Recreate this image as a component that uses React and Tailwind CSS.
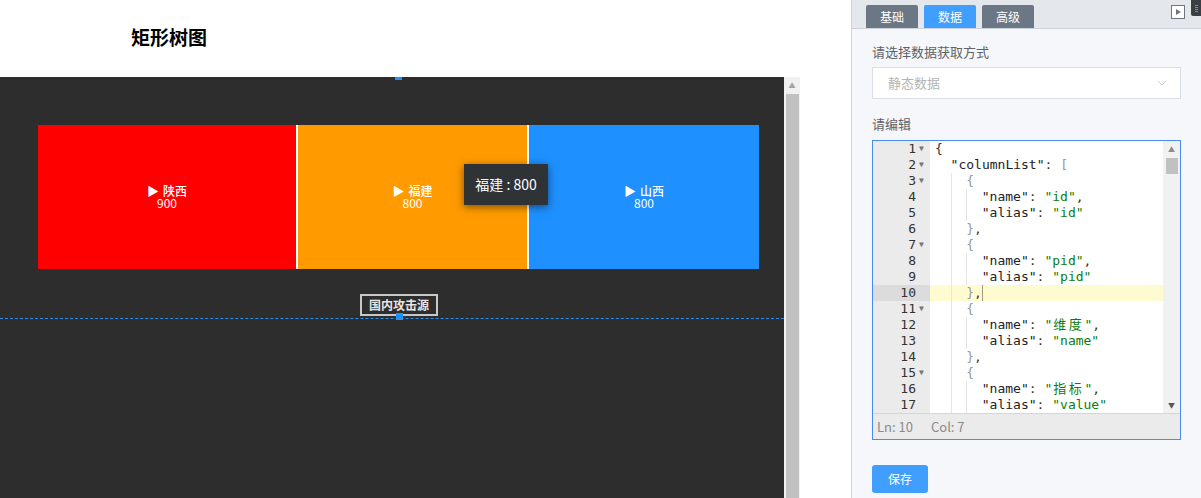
import { ChevronDown } from 'lucide-react';

const code = [
  { t: [['p', '{']], fold: true, ind: 0 },
  { t: [['k', '"columnList"'], ['p', ': '], ['b', '[']], fold: true, ind: 1 },
  { t: [['b', '{']], fold: true, ind: 2 },
  { t: [['k', '"name"'], ['p', ': '], ['s', '"id"'], ['p', ',']], ind: 3 },
  { t: [['k', '"alias"'], ['p', ': '], ['s', '"id"']], ind: 3 },
  { t: [['b', '}'], ['p', ',']], ind: 2 },
  { t: [['b', '{']], fold: true, ind: 2 },
  { t: [['k', '"name"'], ['p', ': '], ['s', '"pid"'], ['p', ',']], ind: 3 },
  { t: [['k', '"alias"'], ['p', ': '], ['s', '"pid"']], ind: 3 },
  { t: [['b', '}'], ['p', ',']], ind: 2, active: true },
  { t: [['b', '{']], fold: true, ind: 2 },
  { t: [['k', '"name"'], ['p', ': '], ['s', '"'], ['c', '维度'], ['s', '"'], ['p', ',']], ind: 3 },
  { t: [['k', '"alias"'], ['p', ': '], ['s', '"name"']], ind: 3 },
  { t: [['b', '}'], ['p', ',']], ind: 2 },
  { t: [['b', '{']], fold: true, ind: 2 },
  { t: [['k', '"name"'], ['p', ': '], ['s', '"'], ['c', '指标'], ['s', '"'], ['p', ',']], ind: 3 },
  { t: [['k', '"alias"'], ['p', ': '], ['s', '"value"']], ind: 3 },
];

const tokenClass = {
  p: 'text-[#333]',
  b: 'text-[#999]',
  k: 'text-[#222]',
  s: 'text-[#0a7d0a]',
  c: 'text-[#0a7d0a] tracking-[2.6px] pl-[1px]',
};

function Cell({ color, name, value, border }) {
  return (
    <div className={`h-full flex flex-col items-center justify-center text-white text-[12px] ${color} ${border ? 'border-l-2 border-white' : ''}`}>
      <div className="h-[12px] leading-[12px] flex items-center gap-1 font-medium">
        <span>▶</span>
        <span>{name}</span>
      </div>
      <div className="h-[12px] leading-[12px]">{value}</div>
    </div>
  );
}

function Editor() {
  return (
    <div className="mt-[7px] h-[300px] border border-[#4a8af4] bg-white flex flex-col">
      <div className="flex-1 flex overflow-hidden relative">
        <div className="w-[57px] bg-[#ebebeb] text-[13px] text-[#333]" style={{ fontFamily: '"DejaVu Sans Mono", monospace' }}>
          {code.map((l, i) => (
            <div key={i} className={`h-4 leading-4 flex justify-end pr-[4px] ${l.active ? 'bg-[#dcdcdc]' : ''}`}>
              <span>{i + 1}</span>
              <span className="w-[10px] text-[8px] text-[#777] pl-[3px] leading-4">{l.fold ? '▼' : ''}</span>
            </div>
          ))}
        </div>
        <div className="flex-1 text-[13px] relative" style={{ fontFamily: '"DejaVu Sans Mono", "Noto Sans CJK SC", monospace' }}>
          {code.map((l, i) => (
            <div key={i} className={`h-4 leading-4 pl-[5px] flex whitespace-pre ${l.active ? 'bg-[#fffbd1]' : ''}`}>
              {Array.from({ length: l.ind }).map((_, j) => (
                <span key={j} className={`w-[15.6px] shrink-0 ${j > 0 ? 'border-l border-[#e6e6e6]' : ''}`}></span>
              ))}
              {l.t.map(([c, s], j) => (
                <span key={j} className={tokenClass[c]}>{s}</span>
              ))}
              {l.active && <span className="w-px h-4 bg-[#a39a7a]"></span>}
            </div>
          ))}
        </div>
        <div className="w-[17px] bg-[#f1f1f1] flex flex-col items-center">
          <span className="text-[7px] text-[#8a8a8a] leading-[10px] mt-[3px]">▲</span>
          <div className="w-[12px] h-[16px] bg-[#c1c1c1] mt-[4px]"></div>
          <div className="flex-1"></div>
          <span className="text-[7px] text-[#555] leading-[10px] mb-[3px]">▼</span>
        </div>
      </div>
      <div className="h-[26px] bg-[#ebebeb] border-t border-[#d6d6d6] flex items-center pl-[4px] gap-[18px] text-[13px] text-[#8a8a8a]">
        <span>Ln: 10</span>
        <span>Col: 7</span>
      </div>
    </div>
  );
}

export default function App() {
  return (
    <div className="w-[1201px] h-[498px] flex overflow-hidden bg-white" style={{ fontFamily: '"Noto Sans CJK SC", "Noto Sans", sans-serif' }}>
      {/* Canvas side */}
      <div className="w-[851px] flex flex-col shrink-0">
        <div className="h-[77px] flex items-center pl-[131px] pb-[3px]">
          <h1 className="text-[19px] font-bold text-black">矩形树图</h1>
        </div>
        <div className="flex-1 flex">
          <div className="w-[784px] bg-[#2d2d2d] relative pt-[48px] pl-[38px]">
            <div className="absolute left-[395px] top-0 w-[7px] h-[3px] bg-[#1e90ff]"></div>
            <div className="w-[721px] h-[144px] grid grid-cols-[258px_231px_232px]">
              <Cell color="bg-[#ff0000]" name="陕西" value="900" />
              <Cell color="bg-[#ff9b00]" name="福建" value="800" border />
              <Cell color="bg-[#1e90ff]" name="山西" value="800" border />
            </div>
            <div className="absolute left-[464px] top-[87px] w-[84px] h-[41px] bg-[#2f3336] text-white text-[14px] flex items-center justify-center shadow-[0_2px_8px_rgba(0,0,0,0.5)]">
              福建 : 800
            </div>
            <div className="absolute left-0 right-0 top-[241px] border-t border-dashed border-[#2b8ee6]"></div>
            <div className="absolute left-[360px] top-[217px] w-[78px] h-[22px] border-2 border-[#c8c8c8] flex items-center justify-center text-[12px] font-bold text-[#e6e6e6] leading-none">
              国内攻击源
            </div>
            <div className="absolute left-[396px] top-[236px] w-[7px] h-[7px] bg-[#1e90ff]"></div>
          </div>
          <div className="w-[16px] bg-[#f1f1f1] flex flex-col items-center">
            <div className="h-[17px] flex items-center justify-center text-[7px] text-[#a3a3a3]">▲</div>
            <div className="w-[13px] flex-1 bg-[#c1c1c1] ml-[1px]"></div>
          </div>
          <div className="flex-1 bg-white"></div>
        </div>
      </div>

      {/* Properties panel */}
      <div className="flex-1 bg-[#f5f7fa] border-l border-[#cfd5dd] flex flex-col">
        <div className="h-[29px] bg-[#e4e7eb] border-b border-[#ccd2da] flex items-end pl-[14px] gap-[6px] relative">
          <div className="w-[52px] h-[23px] bg-[#6b7785] text-white text-[12px] flex items-center justify-center rounded-t-[2px]">基础</div>
          <div className="w-[52px] h-[23px] bg-[#409eff] text-white text-[12px] flex items-center justify-center rounded-t-[2px]">数据</div>
          <div className="w-[52px] h-[23px] bg-[#6b7785] text-white text-[12px] flex items-center justify-center rounded-t-[2px]">高级</div>
          <div className="absolute left-[319px] top-[5px] w-[14px] h-[14px] border border-[#6b7785] bg-white flex items-center justify-center">
            <span className="w-0 h-0 border-y-[3.5px] border-y-transparent border-l-[5px] border-l-[#6b7785] ml-[1px]"></span>
          </div>
          <div className="absolute left-[339px] top-0 w-[10px] h-[16px] bg-[#3a3f45] rounded-bl-[2px] flex flex-col items-center justify-center gap-[1px]">
            <span className="w-[3px] h-[1px] bg-[#1ea7ff]"></span>
            <span className="w-[3px] h-[1px] bg-[#1ea7ff]"></span>
            <span className="w-[3px] h-[1px] bg-[#1ea7ff]"></span>
            <span className="w-[3px] h-[1px] bg-[#1ea7ff]"></span>
          </div>
        </div>
        <div className="px-[20px] pt-[14px]">
          <div className="text-[13px] text-[#606266] leading-[18px]">请选择数据获取方式</div>
          <div className="mt-[6px] h-[32px] bg-white border border-[#dcdfe6] flex items-center justify-between pl-[15px] pr-[10px]">
            <span className="text-[13px] text-[#b4b4b4]">静态数据</span>
            <ChevronDown size={16} strokeWidth={1.2} className="text-[#c0c4cc]" />
          </div>
          <div className="mt-[16px] text-[13px] text-[#606266] leading-[18px]">请编辑</div>
          <Editor />
          <button className="mt-[25px] w-[56px] h-[28px] bg-[#409eff] text-white text-[12px] rounded-[3px] flex items-center justify-center">保存</button>
        </div>
      </div>
    </div>
  );
}
